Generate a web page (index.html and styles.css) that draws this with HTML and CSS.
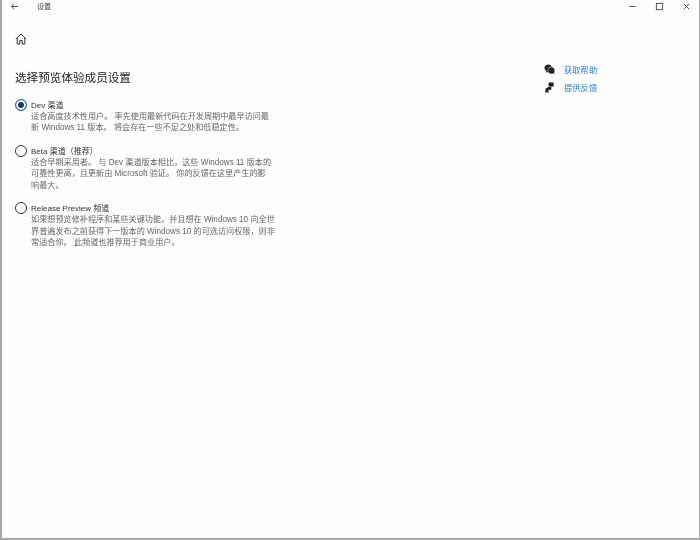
FILE: index.html
```html
<!DOCTYPE html>
<html lang="zh-CN">
<head>
    <meta charset="UTF-8">
    <meta name="viewport" content="width=device-width, initial-scale=1.0">
    <title>设置</title>
    <link rel="stylesheet" href="styles.css">
</head>
<body>
    <div class="window">
        <header class="titlebar">
            <svg class="back-icon" viewBox="0 0 10 10"><path d="M9 5H1.500M4.500 2 1.500 5l3 3"/></svg>
            <span class="app-name">设置</span>
            <div class="window-controls">
                <svg viewBox="0 0 10 10"><path d="M1.500 5h7"/></svg>
                <svg viewBox="0 0 10 10"><rect x="1.500" y="1.500" width="7" height="7"/></svg>
                <svg viewBox="0 0 10 10"><path d="M2 2l6 6M8 2l-6 6"/></svg>
            </div>
        </header>

        <div class="home-row">
            <svg class="home-icon" viewBox="0 0 12 12"><path d="M.8 6 6 1l5.200 5M2.200 5v6h2.600V7.500h2.400V11h2.600V5"/></svg>
        </div>

        <div class="content">
            <main class="main">
                <h1>选择预览体验成员设置</h1>

                <div class="option">
                    <span class="radio selected"></span>
                    <div class="option-text">
                        <div class="option-title">Dev 渠道</div>
                        <p>适合高度技术性用户。 率先使用最新代码在开发周期中最早访问最<br>新 Windows 11 版本。 将会存在一些不足之处和低稳定性。</p>
                    </div>
                </div>

                <div class="option">
                    <span class="radio"></span>
                    <div class="option-text">
                        <div class="option-title">Beta 渠道（推荐）</div>
                        <p>适合早期采用者。 与 Dev 渠道版本相比，这些 Windows 11 版本的<br>可靠性更高，且更新由 Microsoft 验证。 你的反馈在这里产生的影<br>响最大。</p>
                    </div>
                </div>

                <div class="option">
                    <span class="radio"></span>
                    <div class="option-text">
                        <div class="option-title">Release Preview 频道</div>
                        <p>如果想预览修补程序和某些关键功能，并且想在 Windows 10 向全世<br>界普遍发布之前获得下一版本的 Windows 10 的可选访问权限，则非<br>常适合你。 此频道也推荐用于商业用户。</p>
                    </div>
                </div>
            </main>

            <aside class="side">
                <a class="side-link" href="#">
                    <svg viewBox="0 0 12 12">
                        <path class="solid" d="M.5 5a4.200 4.200 0 0 1 8-2A3.800 3.800 0 0 0 4.500 8.500L2.500 9.800l.2-2.300A4 4 0 0 1 .5 5z"/>
                        <circle class="solid" cx="8" cy="7" r="3.500"/>
                        <path class="solid" d="M9.500 9.500l1.700 1.800-.2-3z"/>
                    </svg>
                    <span>获取帮助</span>
                </a>
                <a class="side-link" href="#">
                    <svg viewBox="0 0 12 12">
                        <path class="solid" d="M5 .5h5.500V5H5z"/>
                        <path class="solid" d="M1.500 11.500V8.500C1.500 6.500 4 5.500 6 5.500h2v3H5v3z"/>
                    </svg>
                    <span>提供反馈</span>
                </a>
            </aside>
        </div>
    </div>
</body>
</html>
```

FILE: styles.css
```css
* {
    box-sizing: border-box;
}

body {
    margin: 0;
    background-color: #fff;
    font-family: "Liberation Sans", "Noto Sans CJK SC", sans-serif;
    color: #333;
}

.window {
    height: 540px;
    width: 700px;
    background-color: #fefefe;
    border-left: 2px solid #a8a8a8;
    border-right: 1.500px solid #b0b0b0;
    border-bottom: 2px solid #a8a8a8;
    filter: blur(0.45px);
}

.titlebar {
    display: flex;
    align-items: center;
    height: 12px;
    padding-left: 8px;
}

.titlebar svg {
    fill: none;
    stroke: #444;
    stroke-width: 1;
}

.back-icon {
    width: 9px;
    height: 9px;
}

.app-name {
    margin-left: 18px;
    font-size: 7px;
    color: #444;
}

.window-controls {
    display: flex;
    gap: 18px;
    margin-left: auto;
    margin-right: 8px;
}

.window-controls svg {
    width: 9px;
    height: 9px;
}

.home-row {
    display: flex;
    padding: 21px 0 0 13px;
}

.home-icon {
    width: 12px;
    height: 12px;
    fill: none;
    stroke: #333;
    stroke-width: 1;
}

.content {
    display: flex;
    padding-left: 13px;
}

.main {
    width: 529px;
}

h1 {
    margin: 23px 0 13px;
    font-size: 11.600px;
    line-height: 19px;
    font-weight: 400;
    color: #222;
}

.option {
    display: flex;
    gap: 4px;
    margin-bottom: 12.500px;
}

.radio {
    flex: none;
    width: 12px;
    height: 12px;
    margin-top: -1px;
    border: 1.500px solid #333;
    border-radius: 50%;
    background-color: #fff;
}

.radio.selected {
    border-color: #2a6cb0;
    background-color: #123a6b;
    box-shadow: inset 0 0 0 2px #fff;
}

.option-title {
    font-size: 8px;
    line-height: 11px;
    color: #333;
}

.option-text p {
    margin: 0;
    font-size: 8.150px;
    line-height: 11.250px;
    color: #666;
    white-space: nowrap;
}

.side {
    display: flex;
    flex-direction: column;
    gap: 6px;
    margin-top: 18px;
}

.side-link {
    display: flex;
    align-items: center;
    gap: 9px;
    height: 12px;
    font-size: 8.300px;
    color: #2a7fd0;
    text-decoration: none;
}

.side-link svg {
    width: 11px;
    height: 11px;
}

.solid {
    fill: #222;
    stroke: none;
}
```
